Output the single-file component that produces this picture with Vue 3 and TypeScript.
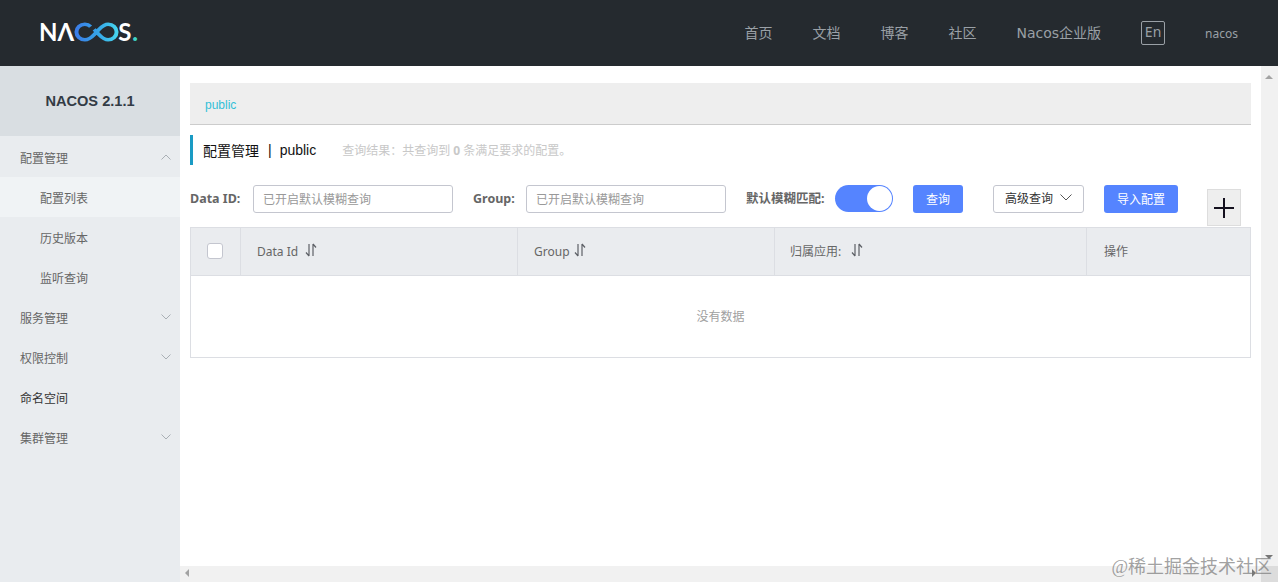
<template>
  <div class="page">
    <header class="topbar">
      <div class="logo">
        <span class="logo-text">NΛ</span>
        <svg class="logo-loop" width="45" height="20" viewBox="0 0 40.6 20" preserveAspectRatio="none" fill="none">
          <defs>
            <linearGradient id="loopGrad" x1="0" y1="0" x2="1" y2="0">
              <stop offset="0" stop-color="#3b7de8" />
              <stop offset="0.55" stop-color="#35a6e8" />
              <stop offset="1" stop-color="#45d3ee" />
            </linearGradient>
          </defs>
          <path
            d="M15 4.6C13.6 3 11.7 2.2 9.8 2.2 5.5 2.2 2.2 5.6 2.2 10s3.3 7.8 7.6 7.8c3.6 0 6-2.4 8.4-5.2l4.4-5.2c2.4-2.8 4.6-5.2 8.2-5.2 4.3 0 7.6 3.4 7.6 7.8s-3.3 7.8-7.6 7.8c-3.6 0-5.8-2.4-8.2-5.2l-4.4-5.2"
            stroke="url(#loopGrad)"
            stroke-width="3.6"
          />
        </svg>
        <span class="logo-text">S</span>
        <span class="logo-dot">.</span>
      </div>
      <nav class="topnav">
        <a v-for="link in navLinks" :key="link">{{ link }}</a>
        <span class="lang">En</span>
        <span class="user">nacos</span>
      </nav>
    </header>

    <div class="body">
      <aside class="sidebar">
        <div class="version">NACOS 2.1.1</div>
        <ul class="menu">
          <li
            v-for="item in menu"
            :key="item.label"
            :class="{ sub: item.sub, active: item.active, dark: item.dark }"
          >
            <span>{{ item.label }}</span>
            <svg v-if="item.arrow" class="caret" width="10" height="6" viewBox="0 0 10 6" fill="none">
              <path :d="item.arrow === 'up' ? 'M.5 5.5 5 1l4.5 4.5' : 'M.5.5 5 5 9.5.5'" stroke="#a9afb5" />
            </svg>
          </li>
        </ul>
      </aside>

      <div class="content">
        <div class="content-row">
          <main class="main">
            <div class="namespace"><span>public</span></div>

            <div class="title">
              <span class="title-name">配置管理</span>
              <span class="title-sep">|</span>
              <span class="title-ns">public</span>
              <span class="title-result">查询结果：共查询到 <b>0</b> 条满足要求的配置。</span>
            </div>

            <div class="filters">
              <label class="field field-id">Data ID:</label>
              <input class="text-input" type="text" placeholder="已开启默认模糊查询" />
              <label class="field field-group">Group:</label>
              <input class="text-input" type="text" placeholder="已开启默认模糊查询" />
              <label class="field field-fuzzy">默认模糊匹配:</label>
              <span class="switch"><span class="knob"></span></span>
              <button class="btn primary query">查询</button>
              <button class="btn advanced">
                高级查询
                <svg width="12" height="7" viewBox="0 0 12 7" fill="none">
                  <path d="M.5.5 6 6 11.5.5" stroke="#555" />
                </svg>
              </button>
              <button class="btn primary">导入配置</button>
              <button class="plus" aria-label="add">
                <svg width="20" height="20" viewBox="0 0 20 20">
                  <path d="M0 10h20M10 0v20" stroke="#14101e" stroke-width="2" />
                </svg>
              </button>
            </div>

            <div class="table">
              <div class="thead">
                <div class="th check"><span class="checkbox"></span></div>
                <div v-for="col in columns" :key="col.label" class="th" :class="col.cls">
                  <span class="th-label">{{ col.label }}</span>
                  <svg v-if="col.sort" class="sort" width="12" height="14" viewBox="0 0 12 14" fill="none">
                    <path d="M4 1v12M4 13 1 9.5M8 13V1M8 1l3 3.5" stroke="#5d6066" stroke-width="1.2" />
                  </svg>
                </div>
              </div>
              <div class="empty">没有数据</div>
            </div>
          </main>
          <div class="vscroll">
            <i class="tri up"></i>
            <i class="tri down"></i>
          </div>
        </div>
        <div class="hscroll">
          <i class="tri left"></i>
          <i class="tri right"></i>
          <span class="corner"></span>
        </div>
      </div>
    </div>

    <div class="watermark">@稀土掘金技术社区</div>
  </div>
</template>

<script setup lang="ts">
interface MenuItem {
  label: string;
  sub?: boolean;
  active?: boolean;
  dark?: boolean;
  arrow?: 'up' | 'down';
}

const navLinks = ['首页', '文档', '博客', '社区', 'Nacos企业版'];

const menu: MenuItem[] = [
  { label: '配置管理', arrow: 'up' },
  { label: '配置列表', sub: true, active: true },
  { label: '历史版本', sub: true },
  { label: '监听查询', sub: true },
  { label: '服务管理', arrow: 'down' },
  { label: '权限控制', arrow: 'down' },
  { label: '命名空间', dark: true },
  { label: '集群管理', arrow: 'down' },
];

const columns = [
  { label: 'Data Id', sort: true, cls: 'col-id' },
  { label: 'Group', sort: true, cls: 'col-group' },
  { label: '归属应用:', sort: true, cls: 'col-app' },
  { label: '操作', sort: false, cls: 'col-op' },
];
</script>

<style>
html,
body {
  margin: 0;
  overflow: hidden;
}
</style>

<style scoped>
.page {
  position: relative;
  width: 1278px;
  height: 582px;
  overflow: hidden;
  background: #fff;
  display: flex;
  flex-direction: column;
  font-family: "Noto Sans", "Noto Sans CJK SC", sans-serif;
  font-size: 12px;
  color: #666;
}

.topbar {
  height: 66px;
  flex: none;
  background: #252a2f;
  display: flex;
  align-items: center;
  justify-content: space-between;
  padding: 0 40px;
}

.logo {
  display: flex;
  align-items: center;
  height: 20px;
  margin-left: -1px;
  margin-top: -2px;
}

.logo-text {
  font-family: Lato, sans-serif;
  font-weight: 700;
  font-size: 24px;
  line-height: 20px;
  color: #fff;
}

.logo-loop {
  margin: 0 -1px 0 0;
}

.logo-dot {
  font-family: Lato, sans-serif;
  font-weight: 900;
  font-size: 24px;
  line-height: 20px;
  color: #3fd3c5;
  margin-left: 1px;
}

.topnav {
  display: flex;
  align-items: center;
  gap: 40px;
  color: #9aa0a6;
  font-size: 14px;
  font-family: "DejaVu Sans", "Noto Sans CJK SC", sans-serif;
}

.topnav a {
  margin-bottom: 2px;
}

.lang {
  width: 24px;
  height: 24px;
  box-sizing: border-box;
  border: 1px solid #9aa0a6;
  border-radius: 2px;
  text-align: center;
  line-height: 20px;
  font-family: "Noto Sans", sans-serif;
}

.user {
  font-size: 12px;
  font-family: "Noto Sans", sans-serif;
}

.body {
  flex: 1;
  display: flex;
  min-height: 0;
}

.sidebar {
  width: 180px;
  flex: none;
  background: #e9ecef;
}

.version {
  height: 70px;
  margin-bottom: 1px;
  background: #d9dee2;
  display: flex;
  align-items: center;
  justify-content: center;
  font-weight: 700;
  font-size: 14.6px;
  color: #333b45;
  font-family: "Liberation Sans", sans-serif;
}

.menu {
  list-style: none;
  margin: 0;
  padding: 0;
}

.menu li {
  height: 40px;
  padding: 0 9px 0 20px;
  display: flex;
  align-items: center;
  justify-content: space-between;
  color: #666;
  font-family: "Noto Sans CJK SC", sans-serif;
}

.menu li.sub {
  padding-left: 40px;
}

.menu li.active {
  background: #f0f3f5;
}

.menu li.dark {
  color: #333;
}

.caret {
  margin-top: -1px;
}

.content {
  flex: 1;
  min-width: 0;
  display: flex;
  flex-direction: column;
}

.content-row {
  flex: 1;
  min-height: 0;
  display: flex;
}

.main {
  flex: 1;
  min-width: 0;
  padding: 17px 10px 0;
}

.namespace {
  padding: 3px 0 0 15px;
  height: 38px;
  display: flex;
  align-items: center;
  background: #eee;
  border-bottom: 1px solid #ccc;
  color: #33c0d8;
  font-family: "Liberation Sans", sans-serif;
}

.title {
  height: 30px;
  margin-top: 10px;
  border-left: 3px solid #1a9bc4;
  padding-left: 10px;
  display: flex;
  align-items: center;
  color: #111;
  font-size: 14px;
  font-family: "Liberation Sans", "Noto Sans CJK SC", sans-serif;
}

.title-sep {
  margin: 0 8px 0 9px;
}

.title-result {
  margin-left: 26px;
  color: #c8c8c8;
  font-size: 12px;
  font-family: "Noto Sans", "Noto Sans CJK SC", sans-serif;
}

.filters {
  position: relative;
  margin-top: 20px;
  height: 42px;
  display: flex;
  align-items: flex-start;
}

.field {
  flex: none;
  font-weight: 700;
  line-height: 28px;
  color: #666;
  margin-right: 12px;
  white-space: nowrap;
  font-family: "Noto Sans", "Noto Sans CJK SC", sans-serif;
}

.field-id {
  width: 51px;
  font-size: 12.5px;
}

.field-group {
  width: 41px;
  font-size: 12.5px;
}

.field-fuzzy {
  width: 77px;
  font-size: 12.5px;
}

.text-input {
  width: 200px;
  height: 28px;
  box-sizing: border-box;
  margin-right: 20px;
  padding: 0 9px 2px;
  border: 1px solid #c4c6cf;
  border-radius: 3px;
  outline: none;
  font: 12px "Noto Sans CJK SC", sans-serif;
}

.text-input::placeholder {
  color: #999;
}

.switch {
  width: 58px;
  height: 27px;
  box-sizing: border-box;
  border-radius: 14px;
  background: #5584ff;
  display: flex;
  justify-content: flex-end;
  align-items: center;
  margin-right: 20px;
  flex: none;
}

.knob {
  width: 25px;
  height: 25px;
  margin-right: 1px;
  border-radius: 50%;
  background: #fff;
}

.btn {
  height: 28px;
  box-sizing: border-box;
  border-radius: 3px;
  font: 12px "Noto Sans CJK SC", sans-serif;
  padding: 0 0 2px;
  flex: none;
}

.primary {
  width: 74px;
  border: none;
  background: #5584ff;
  color: #fff;
}

.query {
  width: 50px;
  margin-right: 30px;
}

.advanced {
  width: 91px;
  margin-right: 20px;
  padding-bottom: 3px;
  border: 1px solid #c4c6cf;
  background: #fff;
  color: #333;
  display: flex;
  align-items: center;
  justify-content: center;
  gap: 7px;
}

.plus {
  width: 34px;
  height: 37px;
  margin: 4px 0 0 29px;
  padding: 0;
  box-sizing: border-box;
  border: 1px solid #ddd;
  background: #eee;
  display: flex;
  align-items: center;
  justify-content: center;
  flex: none;
}

.table {
  border: 1px solid #dcdee3;
}

.thead {
  display: flex;
  height: 48px;
  box-sizing: border-box;
  background: #eaecef;
  border-bottom: 1px solid #dcdee3;
  color: #666;
}

.th {
  display: flex;
  align-items: center;
  padding-left: 16px;
  box-sizing: border-box;
  border-right: 1px solid #dcdee3;
}

.th:last-child {
  border-right: none;
}

.th-label {
  margin-bottom: 1px;
}

.check {
  width: 50px;
  padding-left: 16px;
}

.col-id {
  width: 277px;
}

.col-group {
  width: 257px;
}

.col-app {
  width: 312px;
  padding-left: 15px;
}

.col-op {
  flex: 1;
  padding-left: 17px;
}

.checkbox {
  width: 16px;
  height: 16px;
  box-sizing: border-box;
  border: 1px solid #c4c6cf;
  border-radius: 3px;
  background: #fff;
  margin-bottom: 2px;
}

.sort {
  margin: -3px 0 0 7px;
}

.col-group .sort {
  margin-left: 4px;
}

.col-app .sort {
  margin-left: 10px;
}

.empty {
  height: 81px;
  box-sizing: border-box;
  padding-bottom: 3px;
  display: flex;
  align-items: center;
  justify-content: center;
  color: #a0a0a0;
  font-family: "Noto Sans CJK SC", sans-serif;
}

.vscroll {
  width: 17px;
  flex: none;
  position: relative;
  background: #f1f1f1;
}

.hscroll {
  height: 16px;
  flex: none;
  position: relative;
  background: #f1f1f1;
}

.corner {
  position: absolute;
  right: 0;
  top: 0;
  width: 17px;
  height: 16px;
  background: #dcdcdc;
}

.tri {
  position: absolute;
  width: 0;
  height: 0;
  border: 4px solid transparent;
}

.tri.up {
  top: 9px;
  left: 4px;
  border-top: none;
  border-bottom-color: #a3a3a3;
}

.tri.down {
  bottom: 7px;
  left: 4px;
  border-bottom: none;
  border-top-color: #777;
}

.tri.left {
  top: 3px;
  left: 5px;
  border-left: none;
  border-right-color: #a3a3a3;
}

.tri.right {
  top: 3px;
  right: 22px;
  border-right: none;
  border-left-color: #777;
}

.watermark {
  position: absolute;
  right: 6px;
  bottom: 3px;
  font-family: "Liberation Serif", "Noto Sans CJK SC", serif;
  font-size: 18px;
  line-height: 24px;
  color: rgba(120, 120, 120, 0.7);
}
</style>
